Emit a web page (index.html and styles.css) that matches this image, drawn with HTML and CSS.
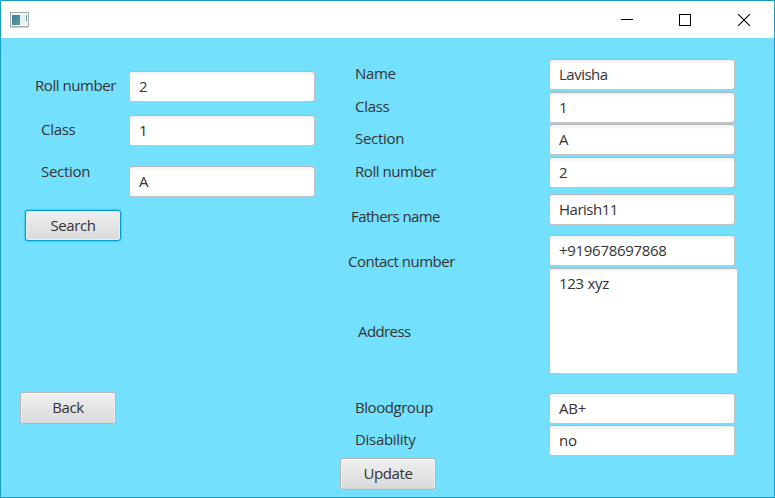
FILE: index.html
```html
<!DOCTYPE html>
<html lang="en">
<head>
<meta charset="utf-8">
<title>Student details</title>
<link rel="stylesheet" href="styles.css">
</head>
<body>
<div class="window">
  <header class="titlebar">
    <svg class="app-icon" width="19" height="16" viewBox="0 0 19 16">
      <defs><linearGradient id="g" x1="0" y1="0" x2="1" y2="1"><stop offset="0" stop-color="#4478a8"/><stop offset="1" stop-color="#57a585"/></linearGradient></defs>
      <rect x=".5" y=".5" width="18" height="14" fill="#f4f5f6" stroke="#a5abb1"/>
      <path d="M0 15.5h19" stroke="#d0d4d7"/>
      <rect x="2" y="3" width="8" height="10" fill="url(#g)"/>
      <path d="M10.5 3v10" stroke="#e2e6e8"/>
      <rect x="12" y="3" width="3" height="10" fill="#eceff1"/>
      <rect x="16" y="3" width="1" height="6" fill="#5f9c91"/>
    </svg>
    <div class="controls">
      <svg width="12" height="12" viewBox="0 0 12 12"><path d="M0 5.5h12" stroke="#000"/></svg>
      <svg width="12" height="12" viewBox="0 0 12 12"><rect x=".5" y=".5" width="11" height="11" fill="none" stroke="#000"/></svg>
      <svg class="close" width="12" height="12" viewBox="0 0 12 12"><path d="M0 0l12 12M12 0L0 12" stroke="#000" stroke-width="1.1"/></svg>
    </div>
  </header>
  <main class="content">
    <section class="search">
      <div class="row s-roll"><label>Roll number</label><div class="field">2</div></div>
      <div class="row s-class"><label>Class</label><div class="field">1</div></div>
      <div class="row s-section"><label>Section</label><div class="field">A</div></div>
      <button class="btn focused">Search</button>
      <button class="btn back">Back</button>
    </section>
    <section class="details">
      <div class="row d-name"><label>Name</label><div class="field">Lavisha</div></div>
      <div class="row d-class"><label>Class</label><div class="field">1</div></div>
      <div class="row d-section"><label>Section</label><div class="field">A</div></div>
      <div class="row d-roll"><label>Roll number</label><div class="field">2</div></div>
      <div class="row d-father"><label>Fathers name</label><div class="field">Harish11</div></div>
      <div class="row d-contact"><label>Contact number</label><div class="field">+919678697868</div></div>
      <div class="row d-address"><label>Address</label><div class="field area">123 xyz</div></div>
      <div class="row d-blood"><label>Bloodgroup</label><div class="field">AB+</div></div>
      <div class="row d-disability"><label>Disability</label><div class="field">no</div></div>
      <button class="btn update">Update</button>
    </section>
  </main>
</div>
</body>
</html>
```
FILE: styles.css
```css
* { box-sizing: border-box; }
body {
  margin: 0;
  font: 15px/31px "Open Sans", "Noto Sans", sans-serif;
  letter-spacing: -0.5px;
  color: #333;
}
.window {
  display: flex;
  flex-direction: column;
  width: 775px;
  height: 498px;
  border: 1px solid #1a9fc0;
  background: #73e1fd;
}
.titlebar {
  display: flex;
  flex: none;
  align-items: center;
  justify-content: space-between;
  height: 37px;
  padding: 0 24px 0 9px;
  background: #fff;
}
.app-icon { display: block; }
.controls { display: flex; gap: 46px; }
.controls svg { display: block; }
.controls .close { margin-left: 1px; }
.content { display: flex; flex: 1; min-height: 0; }
.search { width: 338px; padding-top: 33px; }
.details { width: 435px; padding-top: 21px; }
.row { display: flex; align-items: flex-start; }
.row label { flex: none; white-space: nowrap; }
.search label { width: 128px; padding-left: 40px; }
.details label { width: 210px; padding-left: 16px; }
.field {
  width: 186px;
  height: 31px;
  padding-left: 9px;
  border: 1px solid #c3c3c6;
  border-top-color: #b5b8bb;
  border-radius: 3px;
  background: linear-gradient(#f1f1f1, #fff 5px);
  line-height: 29px;
  white-space: nowrap;
}
.search .s-roll label { padding-left: 34px; }
.s-roll label, .s-class label { margin-top: -1px; }
.s-class { margin-top: 13px; }
.s-section { margin-top: 20px; }
.s-section label { margin-top: -10px; }
.row label { letter-spacing: -0.45px; }
.s-class label, .s-section label, .d-name label,
.d-class label, .d-section label, .d-disability label { letter-spacing: -0.3px; }

.d-name label, .d-class label, .d-section label, .d-roll label { margin-top: -1px; }
.d-class { margin-top: 2px; }
.d-section { margin-top: 1px; }
.d-roll { margin-top: 2px; }
.d-father { height: 31px; margin-top: 6px; }
.details .d-father label { margin-top: 7px; padding-left: 12px; letter-spacing: -0.6px; }
.d-contact { height: 31px; margin-top: 10px; }
.details .d-contact label { margin-top: 11px; padding-left: 9px; letter-spacing: -0.5px; }
.d-contact .field { letter-spacing: -0.3px; }
.d-address { margin-top: 2px; }
.details .d-address label { margin-top: 48px; padding-left: 19px; letter-spacing: -0.6px; }
.field.area { width: 189px; height: 106px; border-radius: 2px; letter-spacing: -0.3px; }
.d-blood { margin-top: 19px; }
.d-disability { margin-top: 1px; }
.d-blood label, .d-disability label { margin-top: -1px; }
.d-blood .field { letter-spacing: -0.2px; }
.d-disability .field { letter-spacing: -0.3px; }

.btn {
  display: block;
  width: 96px;
  height: 32px;
  padding: 0 0 2px;
  border: 1px solid #b5b5b7;
  border-radius: 3px;
  background: linear-gradient(#f0f0f0, #d9d9d9);
  box-shadow: inset 0 1px #fafafa, inset 1px 0 #efefef, inset -1px 0 #efefef;
  font: inherit;
  letter-spacing: -0.4px;
  line-height: 28px;
  color: #333;
}
.btn.focused {
  height: 31px;
  margin: 13px 0 0 24px;
  padding-bottom: 1px;
  border-color: #039ed3;
  box-shadow: inset 0 0 0 1px #e6f0f4, 0 0 1px 1px rgba(3, 158, 211, 0.35);
}
.btn.back { margin: 151px 0 0 19px; }
.btn.update { margin: 2px 0 0 1px; }
```
